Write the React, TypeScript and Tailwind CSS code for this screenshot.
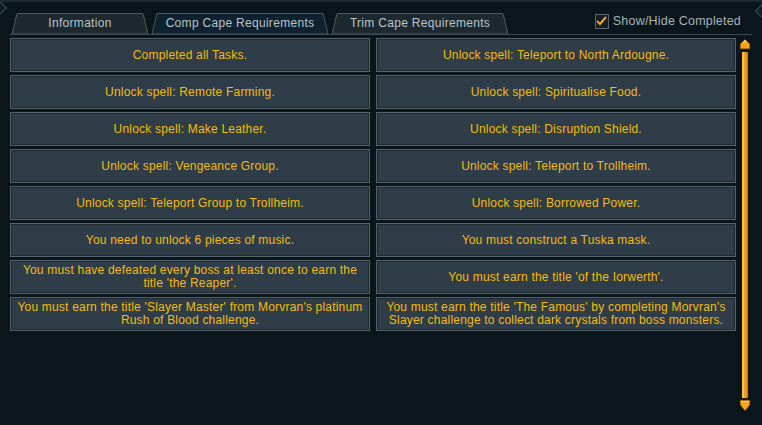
import React from "react";

const left = [
  ["Completed all Tasks."],
  ["Unlock spell: Remote Farming."],
  ["Unlock spell: Make Leather."],
  ["Unlock spell: Vengeance Group."],
  ["Unlock spell: Teleport Group to Trollheim."],
  ["You need to unlock 6 pieces of music."],
  ["You must have defeated every boss at least once to earn the", "title 'the Reaper'."],
  ["You must earn the title 'Slayer Master' from Morvran's platinum", "Rush of Blood challenge."],
];
const right = [
  ["Unlock spell: Teleport to North Ardougne."],
  ["Unlock spell: Spiritualise Food."],
  ["Unlock spell: Disruption Shield."],
  ["Unlock spell: Teleport to Trollheim."],
  ["Unlock spell: Borrowed Power."],
  ["You must construct a Tuska mask."],
  ["You must earn the title 'of the Iorwerth'."],
  ["You must earn the title 'The Famous' by completing Morvran's", "Slayer challenge to collect dark crystals from boss monsters."],
];

function Tab({ label, active, w }: { label: string; active?: boolean; w: number }) {
  return (
    <div className="relative h-[21px] flex items-center justify-center" style={{ width: w }}>
      <svg className="absolute inset-0" width={w} height={21} viewBox={`0 0 ${w} 21`}>
        <polygon
          points={`2,21 7,0.5 ${w - 7},0.5 ${w - 2},21`}
          fill={active ? "#0f2230" : "#1e292f"}
          stroke="#4d5a62"
          strokeWidth="1"
        />
      </svg>
      <span className="relative text-[12px] tracking-[0.3px] text-[#b9c5ca] leading-none mb-[2px]">{label}</span>
    </div>
  );
}

function Cell({ lines }: { lines: string[] }) {
  return (
    <div className="h-[34px] bg-[#2e3d47] border border-[#55626a] shadow-[inset_0_0_0_1px_#1e2a31] flex flex-col items-center justify-center text-center text-[12px] leading-[13px] tracking-[0.2px] text-[#f5bb0c] px-1">
      {lines.map((l, i) => (
        <div key={i} className="whitespace-nowrap">{l}</div>
      ))}
    </div>
  );
}

export default function App() {
  return (
    <div className="w-[762px] h-[425px] bg-[#0a161c] relative overflow-hidden font-['Liberation_Sans',sans-serif]">
      <div className="absolute left-0 top-0 w-full h-[2px] bg-[#1b2a32]" />
      <div className="absolute left-[-5px] top-[3px] w-[10px] h-[10px] rotate-45 border border-[#3e4d56] bg-[#121f26]" />
      <div className="absolute right-[-5px] top-[6px] w-[10px] h-[10px] rotate-45 border border-[#3e4d56] bg-[#121f26]" />
      {/* header */}
      <div className="h-[35px] pt-[13px] pl-[10px] pr-[21px] flex items-start">
        <div className="flex">
          <Tab label="Information" w={140} />
          <Tab label="Comp Cape Requirements" w={180} active />
          <Tab label="Trim Cape Requirements" w={180} />
        </div>
        <div className="ml-auto mt-[-1px] flex items-center gap-[4px]">
          <div className="w-[14px] h-[15px] bg-[#141e23] border border-[#5a666d] flex items-center justify-center">
            <svg width="11" height="10" viewBox="0 0 11 10">
              <path d="M1 5 L4 8 L10 1" fill="none" stroke="#f2a521" strokeWidth="2" />
            </svg>
          </div>
          <span className="text-[12.5px] tracking-[0.2px] text-[#a9b4b9]">Show/Hide Completed</span>
        </div>
      </div>
      <div className="absolute left-[10px] top-[34px] w-[742px] h-[1px] bg-[#3a4850]" />
      {/* body */}
      <div className="mt-[3px] pl-[10px] flex items-start">
        <div className="w-[726px] grid grid-cols-2 gap-x-[6px] gap-y-[3px]">
          {left.map((l, i) => (
            <React.Fragment key={i}>
              <Cell lines={l} />
              <Cell lines={right[i]} />
            </React.Fragment>
          ))}
        </div>
        <div className="ml-[2px] w-[14px]">
          <svg width="14" height="375" viewBox="0 0 14 375">
            <polygon points="7,1 12,6 12,11 2,11 2,6" fill="#f2a423" stroke="#3a2a08" strokeWidth="0.8" />
            <polygon points="7,2 9,4 5,4" fill="#ffd36a" />
            <rect x="3.5" y="13.5" width="7" height="347" fill="#f0a020" stroke="#1a1408" strokeWidth="1" />
            <rect x="4" y="14" width="2" height="346" fill="#ffc24a" />
            <rect x="8.5" y="14" width="1.5" height="346" fill="#c77a10" />
            <polygon points="2,362 12,362 12,367 7,373 2,367" fill="#f2a423" stroke="#3a2a08" strokeWidth="0.8" />
            <polygon points="3,363 11,363 11,364 3,364" fill="#ffd36a" />
          </svg>
        </div>
      </div>
    </div>
  );
}
